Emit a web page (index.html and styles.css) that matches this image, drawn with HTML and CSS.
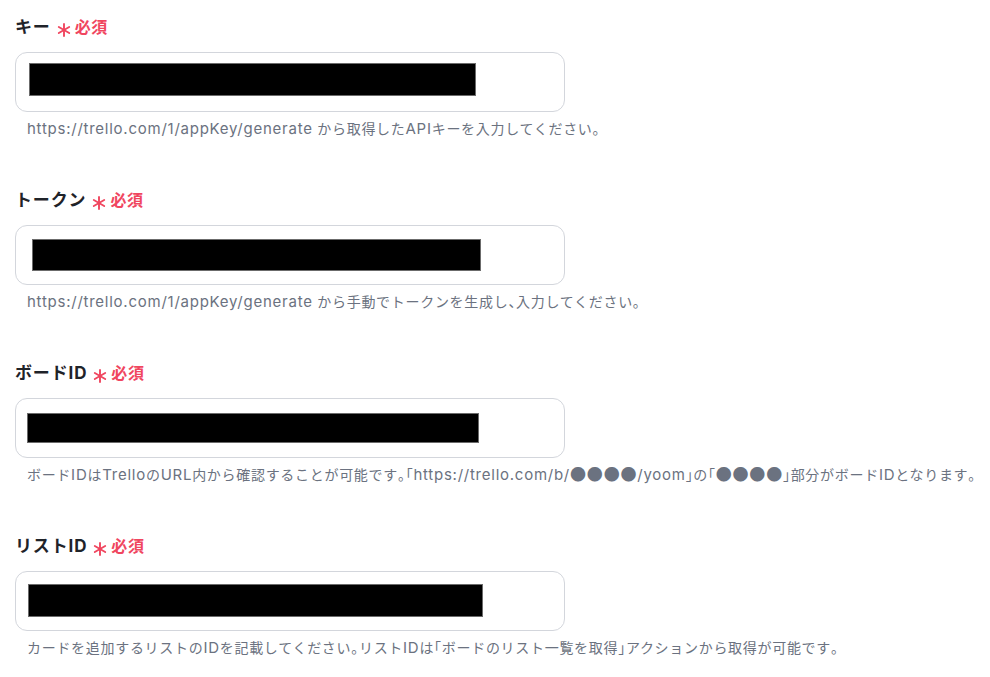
FILE: index.html
```html
<!DOCTYPE html>
<html lang="ja">
<head>
<meta charset="utf-8">
<link rel="stylesheet" href="styles.css">
</head>
<body>
<div class="form">
  <div class="field">
    <div class="label">キー<span class="req"><svg class="ast" viewBox="0 0 14 14"><g stroke="currentColor" stroke-width="1.9" stroke-linecap="round"><line x1="7" y1="1" x2="7" y2="13"/><line x1="1.8" y1="4" x2="12.2" y2="10"/><line x1="1.8" y1="10" x2="12.2" y2="4"/></g></svg>必須</span></div>
    <div class="input"><div class="mask m1"></div></div>
    <div class="help"><span class="en">https://trello.com/1/appKey/generate</span> から取得した<span class="en">API</span>キーを入力してください<span class="p">。</span></div>
  </div>
  <div class="field">
    <div class="label">トークン<span class="req"><svg class="ast" viewBox="0 0 14 14"><g stroke="currentColor" stroke-width="1.9" stroke-linecap="round"><line x1="7" y1="1" x2="7" y2="13"/><line x1="1.8" y1="4" x2="12.2" y2="10"/><line x1="1.8" y1="10" x2="12.2" y2="4"/></g></svg>必須</span></div>
    <div class="input"><div class="mask m2"></div></div>
    <div class="help"><span class="en">https://trello.com/1/appKey/generate</span> から手動でトークンを生成し<span class="p">、</span>入力してください<span class="p">。</span></div>
  </div>
  <div class="field">
    <div class="label">ボードID<span class="req"><svg class="ast" viewBox="0 0 14 14"><g stroke="currentColor" stroke-width="1.9" stroke-linecap="round"><line x1="7" y1="1" x2="7" y2="13"/><line x1="1.8" y1="4" x2="12.2" y2="10"/><line x1="1.8" y1="10" x2="12.2" y2="4"/></g></svg>必須</span></div>
    <div class="input"><div class="mask m3"></div></div>
    <div class="help">ボード<span class="en">ID</span>は<span class="en">Trello</span>の<span class="en">URL</span>内から確認することが可能です<span class="p">。「</span><span class="en">https://trello.com/b/</span><span class="dot">●●●●</span><span class="en">/yoom</span><span class="p">」</span>の<span class="p">「</span><span class="dot">●●●●</span><span class="p">」</span>部分がボード<span class="en">ID</span>となります<span class="p">。</span></div>
  </div>
  <div class="field">
    <div class="label">リストID<span class="req"><svg class="ast" viewBox="0 0 14 14"><g stroke="currentColor" stroke-width="1.9" stroke-linecap="round"><line x1="7" y1="1" x2="7" y2="13"/><line x1="1.8" y1="4" x2="12.2" y2="10"/><line x1="1.8" y1="10" x2="12.2" y2="4"/></g></svg>必須</span></div>
    <div class="input"><div class="mask m4"></div></div>
    <div class="help">カードを追加するリストの<span class="en">ID</span>を記載してください<span class="p">。</span>リスト<span class="en">ID</span>は<span class="p">「</span>ボードのリスト一覧を取得<span class="p">」</span>アクションから取得が可能です<span class="p">。</span></div>
  </div>
</div>
</body>
</html>
```
FILE: styles.css
```css
html, body {
  margin: 0;
  padding: 0;
  background: #ffffff;
}
body {
  font-family: "Inter", "Noto Sans CJK JP", sans-serif;
  color: #1f2329;
}
.form {
  padding: 15px 0 0 15px;
  display: flex;
  flex-direction: column;
}
.field {
  display: flex;
  flex-direction: column;
  margin-bottom: 49px;
}
.label {
  display: flex;
  align-items: center;
  height: 24px;
  font-size: 17px;
  font-weight: 700;
  line-height: 24px;
  letter-spacing: 0.05em;
  color: #1f2329;
}
.req {
  display: inline-flex;
  align-items: center;
  margin-left: 6px;
  color: #f0465f;
  font-size: 16px;
  font-weight: 700;
  letter-spacing: 0.04em;
}
.ast {
  width: 14px;
  height: 14px;
  margin-right: 4px;
  margin-top: 5px;
}
.input {
  margin-top: 13px;
  width: 548px;
  height: 58px;
  border: 1px solid #d3d6dc;
  border-radius: 12px;
  box-sizing: content-box;
  display: flex;
  align-items: flex-start;
}
.mask {
  background: #000;
  border: 1px solid #6b6b6b;
  box-sizing: border-box;
}
.m1 { margin: 10px 0 0 13px; width: 447px; height: 33px; }
.m2 { margin: 13px 0 0 16px; width: 449px; height: 32px; }
.m3 { margin: 14px 0 0 11px; width: 452px; height: 30px; }
.m4 { margin: 12px 0 0 12px; width: 455px; height: 33px; }
.help {
  margin-top: 7px;
  padding-left: 12px;
  font-size: 14px;
  line-height: 20px;
  letter-spacing: 0.05em;
  color: #6b7280;
  white-space: nowrap;
}
.en {
  font-size: 15px;
  letter-spacing: 0.75px;
}
.p {
  font-feature-settings: "halt";
  letter-spacing: 0.05em;
}
.dot {
  font-family: "Noto Sans CJK JP", sans-serif;
  font-size: 16px;
  letter-spacing: 0.05em;
  line-height: 1;
}
```
